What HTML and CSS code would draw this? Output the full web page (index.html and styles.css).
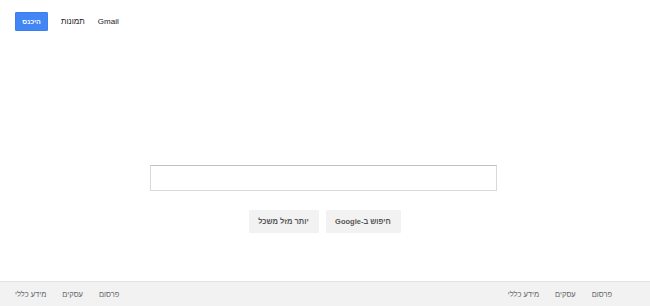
FILE: index.html
```html
<!DOCTYPE html>
<html lang="he">
<head>
<meta charset="utf-8">
<title>Google</title>
<link rel="stylesheet" href="styles.css">
</head>
<body>
<div class="page">
  <header class="topbar">
    <a class="signin" href="#">היכנס</a>
    <a class="toplink" href="#">תמונות</a>
    <a class="toplink" href="#">Gmail</a>
  </header>
  <main class="main">
    <div class="searchbox"></div>
    <div class="buttons">
      <button class="btn btn-lucky" dir="rtl">יותר מזל משכל</button>
      <button class="btn btn-search" dir="rtl">חיפוש ב-Google</button>
    </div>
  </main>
  <footer class="footer">
    <nav class="fgroup">
      <a href="#">מידע כללי</a>
      <a href="#">עסקים</a>
      <a href="#">פרסום</a>
    </nav>
    <nav class="fgroup">
      <a href="#">מידע כללי</a>
      <a href="#">עסקים</a>
      <a href="#">פרסום</a>
    </nav>
  </footer>
</div>
</body>
</html>
```
FILE: styles.css
```css
html, body {
  margin: 0;
  padding: 0;
  background: #fff;
}
body {
  font-family: "Liberation Sans", Arial, sans-serif;
  font-size: 8px;
  color: #222;
}
a { text-decoration: none; color: inherit; }
.page {
  height: 306px;
  display: flex;
  flex-direction: column;
}
.topbar {
  display: flex;
  align-items: center;
  gap: 13px;
  padding: 11px 0 0 15px;
  height: 20px;
}
.signin {
  background: #4285f4;
  color: #fff;
  font-weight: bold;
  font-size: 7px;
  width: 33px;
  height: 19px;
  border-radius: 1px;
  display: flex;
  align-items: center;
  justify-content: center;
  border: 1px solid #3b7ff0;
  box-sizing: border-box;
}
.toplink {
  color: #222;
  font-size: 8px;
}
.main {
  flex: 1;
  display: flex;
  flex-direction: column;
  align-items: center;
  padding-top: 134px;
}
.searchbox {
  width: 347px;
  height: 26px;
  box-sizing: border-box;
  border: 1px solid #d9d9d9;
  border-top-color: #c0c0c0;
  margin-left: -4px;
}
.buttons {
  display: flex;
  gap: 7px;
  margin-top: 19px;
  margin-left: -1px;
}
.btn {
  font-family: "Liberation Sans", Arial, sans-serif;
  font-size: 7.5px;
  font-weight: bold;
  color: #555;
  background: #f2f2f2;
  border: 1px solid #f2f2f2;
  border-radius: 1px;
  height: 23px;
  padding: 0;
  margin: 0;
  white-space: nowrap;
  text-align: center;
}
.btn-lucky { width: 70px; }
.btn-search { width: 75px; }
.footer {
  height: 24px;
  background: #f2f2f2;
  border-top: 1px solid #e4e4e4;
  display: flex;
  justify-content: space-between;
  align-items: center;
  padding: 0 38px 0 15px;
  color: #666;
}
.fgroup {
  display: flex;
  gap: 16px;
  font-size: 7.5px;
  color: #666;
}
```
